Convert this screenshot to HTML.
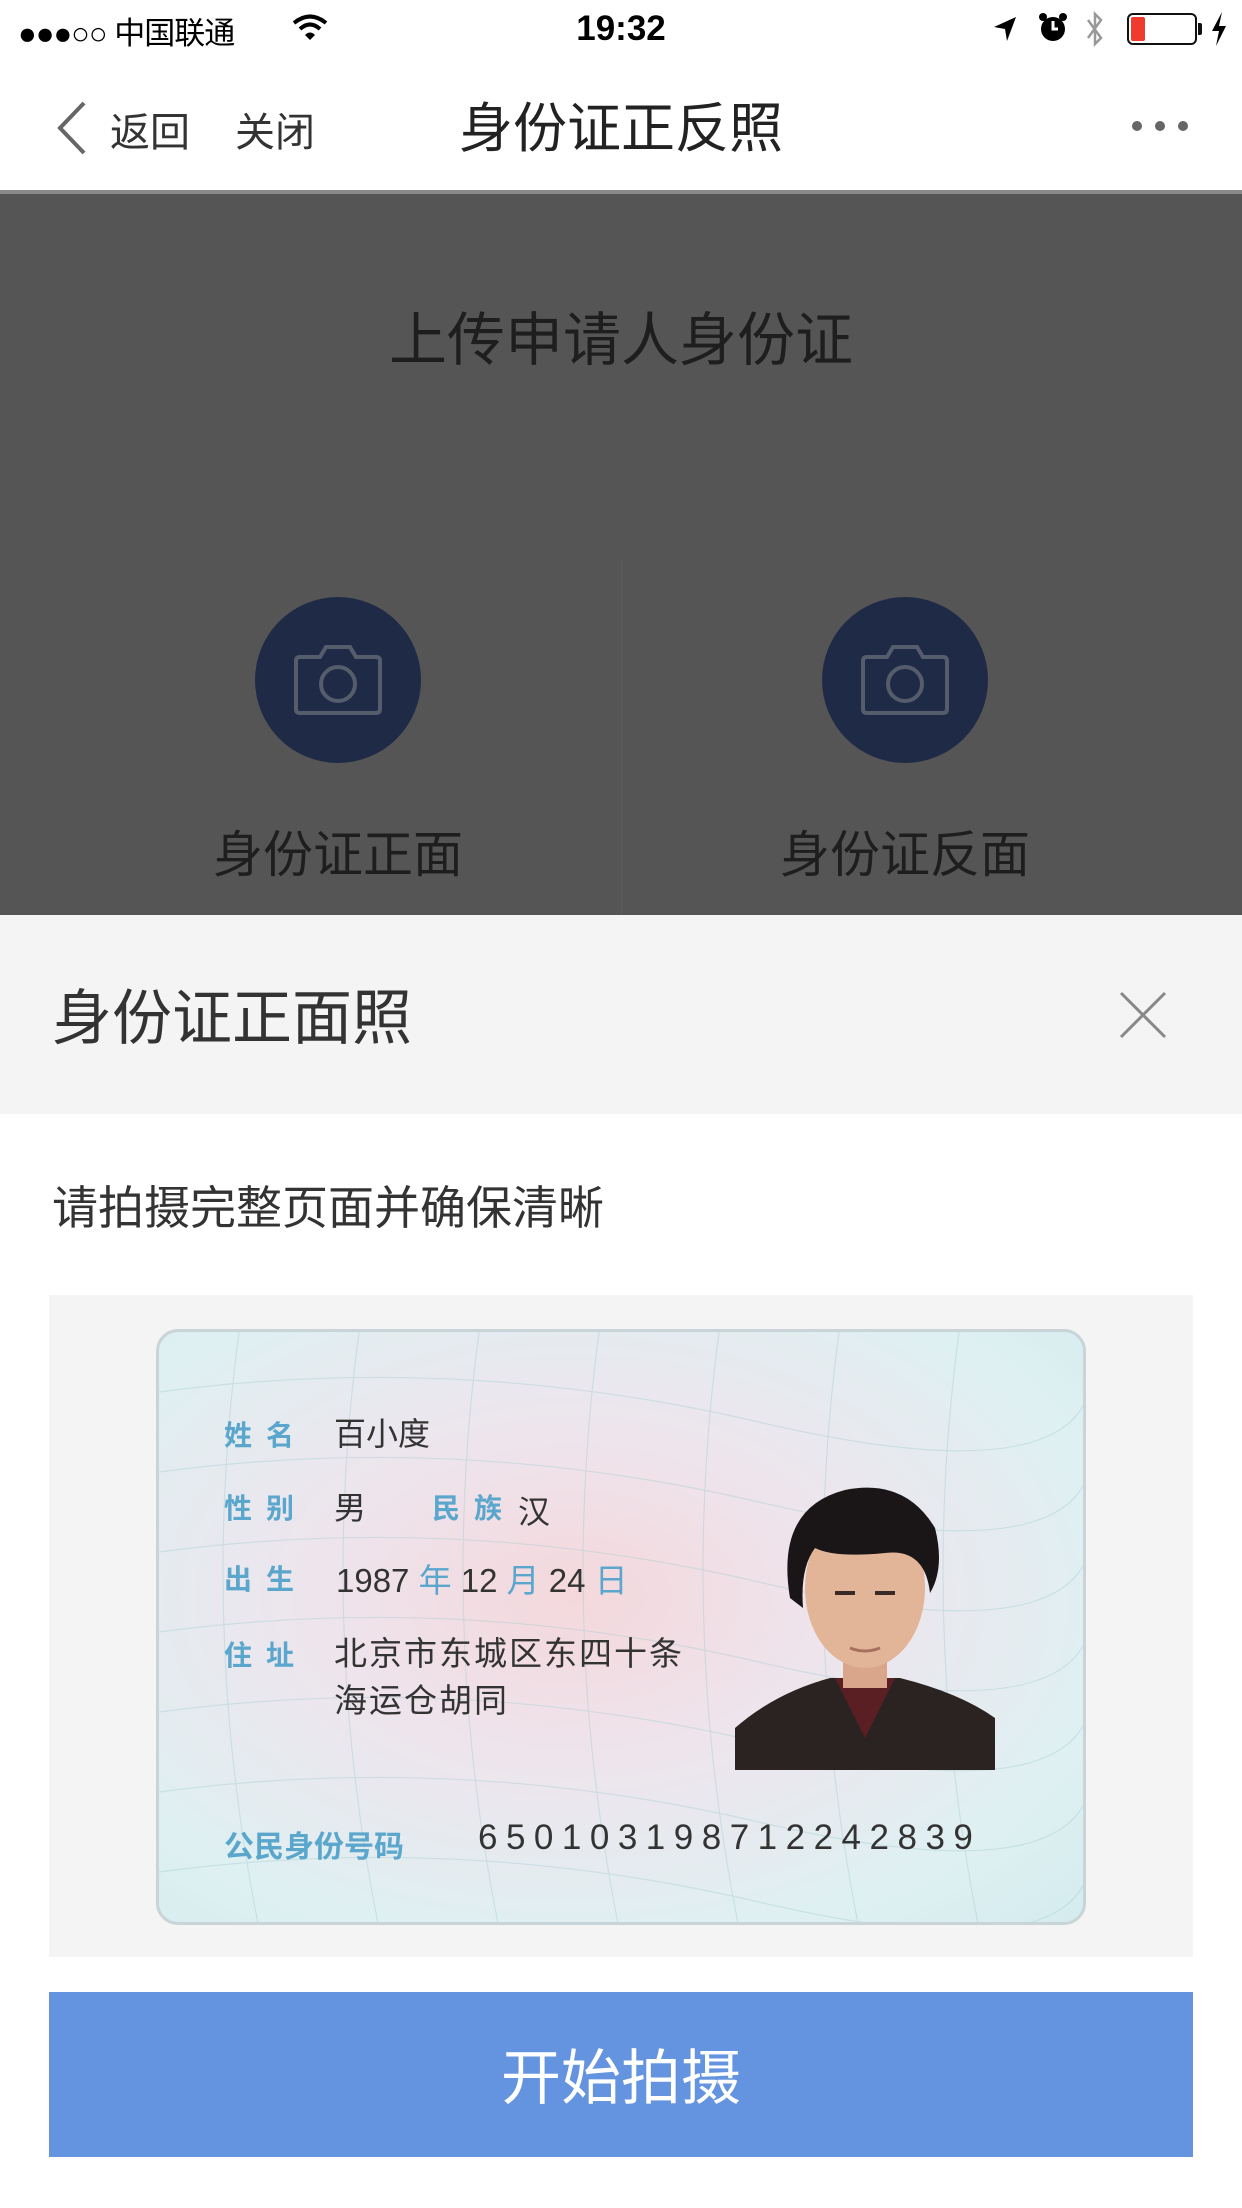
<!DOCTYPE html>
<html><head><meta charset="utf-8"><style>
*{margin:0;padding:0;box-sizing:border-box}
body{width:1242px;height:2208px;background:#fff;font-family:"Liberation Sans","Noto Sans CJK SC",sans-serif;position:relative;overflow:hidden;color:#333}
.a{position:absolute;white-space:nowrap}
</style></head><body>
<!-- status bar -->
<div class="a" style="left:18px;top:8px;font-size:31px;color:#000;letter-spacing:-1px">●●●○○ 中国联通</div>
<svg class="a" style="left:292px;top:14px" width="36" height="28" viewBox="0 0 36 28"><path d="M2 9 Q18 -4 34 9" stroke="#000" stroke-width="4" fill="none"/><path d="M8 15 Q18 6 28 15" stroke="#000" stroke-width="4" fill="none"/><path d="M13 21 L18 26 L23 21 Q18 16 13 21Z" fill="#000"/></svg>
<div class="a" style="left:0;width:1242px;text-align:center;top:9px;font-size:35px;color:#000;font-weight:bold">19:32</div>
<svg class="a" style="left:990px;top:14px" width="30" height="30"><path d="M26 3 L4 13 L15 15 L17 27Z" fill="#000"/></svg>
<svg class="a" style="left:1038px;top:12px" width="30" height="32"><circle cx="15" cy="17" r="12" fill="#000"/><path d="M15 9 V17 H20" stroke="#fff" stroke-width="3" fill="none"/><circle cx="5" cy="5" r="4" fill="#000"/><circle cx="25" cy="5" r="4" fill="#000"/></svg>
<svg class="a" style="left:1084px;top:10px" width="22" height="40"><path d="M4 10 L17 28 L11 34 V4 L17 10 L4 28" stroke="#999" stroke-width="2.5" fill="none"/></svg>
<div class="a" style="left:1127px;top:13px;width:70px;height:32px;border:2px solid #111;border-radius:6px"><div style="position:absolute;left:2px;top:2px;width:14px;height:24px;background:#f03a2e;border-radius:2px"></div></div>
<div class="a" style="left:1198px;top:23px;width:4px;height:12px;background:#111;border-radius:0 2px 2px 0"></div>
<svg class="a" style="left:1210px;top:12px" width="18" height="34"><path d="M12 0 L2 19 H9 L6 34 L16 14 H9Z" fill="#000"/></svg>
<!-- nav -->
<svg class="a" style="left:54px;top:100px" width="34" height="56"><path d="M30 3 L6 28 L30 53" stroke="#666" stroke-width="4" fill="none"/></svg>
<div class="a" style="left:110px;top:100px;font-size:40px;color:#333">返回</div>
<div class="a" style="left:235px;top:100px;font-size:40px;color:#333">关闭</div>
<div class="a" style="left:0;width:1242px;text-align:center;top:84px;font-size:54px;color:#222">身份证正反照</div>
<div class="a" style="left:1132px;top:121px;width:10px;height:10px;border-radius:5px;background:#666"></div>
<div class="a" style="left:1155px;top:121px;width:10px;height:10px;border-radius:5px;background:#666"></div>
<div class="a" style="left:1178px;top:121px;width:10px;height:10px;border-radius:5px;background:#666"></div>
<!-- overlay -->
<div class="a" style="left:0;top:190px;width:1242px;height:4px;background:#8a8a8a"></div>
<div class="a" style="left:0;top:194px;width:1242px;height:721px;background:#555"></div>
<div class="a" style="left:621px;top:560px;width:1px;height:355px;background:#5c5c5c"></div>
<div class="a" style="left:0;width:1242px;text-align:center;top:293px;font-size:58px;color:#1e1e1e">上传申请人身份证</div>
<div class="a" style="left:255px;top:597px;width:166px;height:166px;border-radius:83px;background:#1f2b46"></div>
<div class="a" style="left:822px;top:597px;width:166px;height:166px;border-radius:83px;background:#1f2b46"></div>
<svg class="a" style="left:294px;top:643px" width="88" height="72" viewBox="0 0 88 72"><path d="M6 14 H26 L32 4 H56 L62 14 H82 Q86 14 86 18 V66 Q86 70 82 70 H6 Q2 70 2 66 V18 Q2 14 6 14Z" stroke="#555c6c" stroke-width="4" fill="none"/><circle cx="44" cy="41" r="17" stroke="#555c6c" stroke-width="4" fill="none"/></svg>
<svg class="a" style="left:861px;top:643px" width="88" height="72" viewBox="0 0 88 72"><path d="M6 14 H26 L32 4 H56 L62 14 H82 Q86 14 86 18 V66 Q86 70 82 70 H6 Q2 70 2 66 V18 Q2 14 6 14Z" stroke="#555c6c" stroke-width="4" fill="none"/><circle cx="44" cy="41" r="17" stroke="#555c6c" stroke-width="4" fill="none"/></svg>
<div class="a" style="left:138px;width:400px;text-align:center;top:815px;font-size:50px;color:#1e1e1e">身份证正面</div>
<div class="a" style="left:705px;width:400px;text-align:center;top:815px;font-size:50px;color:#1e1e1e">身份证反面</div>
<!-- sheet -->
<div class="a" style="left:0;top:915px;width:1242px;height:199px;background:#f4f4f4"></div>
<div class="a" style="left:52px;top:970px;font-size:60px;color:#333">身份证正面照</div>
<svg class="a" style="left:1118px;top:990px" width="50" height="50"><path d="M3 3 L47 47 M47 3 L3 47" stroke="#888" stroke-width="3"/></svg>
<div class="a" style="left:52px;top:1172px;font-size:46px;color:#333">请拍摄完整页面并确保清晰</div>
<div class="a" style="left:49px;top:1295px;width:1144px;height:662px;background:#f4f4f4"></div>
<div class="a" style="left:156px;top:1329px;width:930px;height:596px;border-radius:22px;border:3px solid #c8d4d8;background:radial-gradient(ellipse at 45% 45%,#f4d8dc 0%,#eee4ec 35%,#dff0f2 75%,#d4ecee 100%);overflow:hidden">
<svg width="930" height="596" style="position:absolute;left:0;top:0;opacity:.35"><g stroke="#9cc8cc" fill="none" stroke-width="1.2">
<path d="M0 60 Q300 20 600 90 T930 60"/><path d="M0 140 Q300 100 600 170 T930 140"/><path d="M0 220 Q300 180 600 250 T930 220"/><path d="M0 300 Q300 260 600 330 T930 300"/><path d="M0 380 Q300 340 600 410 T930 380"/><path d="M0 460 Q300 420 600 490 T930 460"/><path d="M0 540 Q300 500 600 570 T930 540"/>
<path d="M80 0 Q40 300 100 596"/><path d="M200 0 Q160 300 220 596"/><path d="M320 0 Q280 300 340 596"/><path d="M440 0 Q400 300 460 596"/><path d="M560 0 Q520 300 580 596"/><path d="M680 0 Q640 300 700 596"/><path d="M800 0 Q760 300 820 596"/></g></svg>
</div>
<div class="a" style="left:224px;top:1414px;font-size:28px;color:#5aa6cc;letter-spacing:14px;font-weight:bold">姓名</div>
<div class="a" style="left:334px;top:1409px;font-size:32px;color:#333">百小度</div>
<div class="a" style="left:224px;top:1487px;font-size:28px;color:#5aa6cc;letter-spacing:14px;font-weight:bold">性别</div>
<div class="a" style="left:334px;top:1483px;font-size:32px;color:#333">男</div>
<div class="a" style="left:432px;top:1487px;font-size:28px;color:#5aa6cc;letter-spacing:14px;font-weight:bold">民族</div>
<div class="a" style="left:518px;top:1487px;font-size:32px;color:#333">汉</div>
<div class="a" style="left:224px;top:1558px;font-size:28px;color:#5aa6cc;letter-spacing:14px;font-weight:bold">出生</div>
<div class="a" style="left:336px;top:1554px;font-size:33px;color:#333">1987 <span style="color:#5aa6cc">年</span> 12 <span style="color:#5aa6cc">月</span> 24 <span style="color:#5aa6cc">日</span></div>
<div class="a" style="left:224px;top:1634px;font-size:28px;color:#5aa6cc;letter-spacing:14px;font-weight:bold">住址</div>
<div class="a" style="left:334px;top:1630px;font-size:33px;color:#333;line-height:47px;letter-spacing:2px">北京市东城区东四十条<br>海运仓胡同</div>
<div class="a" style="left:224px;top:1822px;font-size:30px;color:#5aa6cc;font-weight:bold">公民身份号码</div>
<div class="a" style="left:478px;top:1818px;font-size:35px;color:#333;letter-spacing:8.5px">650103198712242839</div>
<svg class="a" style="left:735px;top:1478px" width="260" height="292" viewBox="0 0 260 292">
<path d="M0 292 V250 Q40 215 95 200 L165 200 Q225 215 260 240 V292Z" fill="#2a2322"/>
<path d="M100 200 L130 260 L160 200Z" fill="#5a1f22"/>
<rect x="108" y="170" width="44" height="40" fill="#d9a68c"/>
<ellipse cx="130" cy="110" rx="60" ry="80" fill="#e2b498"/>
<path d="M55 120 Q40 30 110 12 Q170 0 200 50 Q210 90 195 115 Q190 70 150 75 Q100 80 80 70 Q65 90 68 130Z" fill="#1a1516"/>
<path d="M100 115 h20 M140 115 h20" stroke="#3a2a26" stroke-width="4"/>
<path d="M115 170 q15 6 30 0" stroke="#a6705e" stroke-width="3" fill="none"/>
</svg>
<!-- button -->
<div class="a" style="left:49px;top:1992px;width:1144px;height:165px;background:#6494e0"></div>
<div class="a" style="left:49px;width:1144px;text-align:center;top:2030px;font-size:60px;color:#fff">开始拍摄</div>
</body></html>
